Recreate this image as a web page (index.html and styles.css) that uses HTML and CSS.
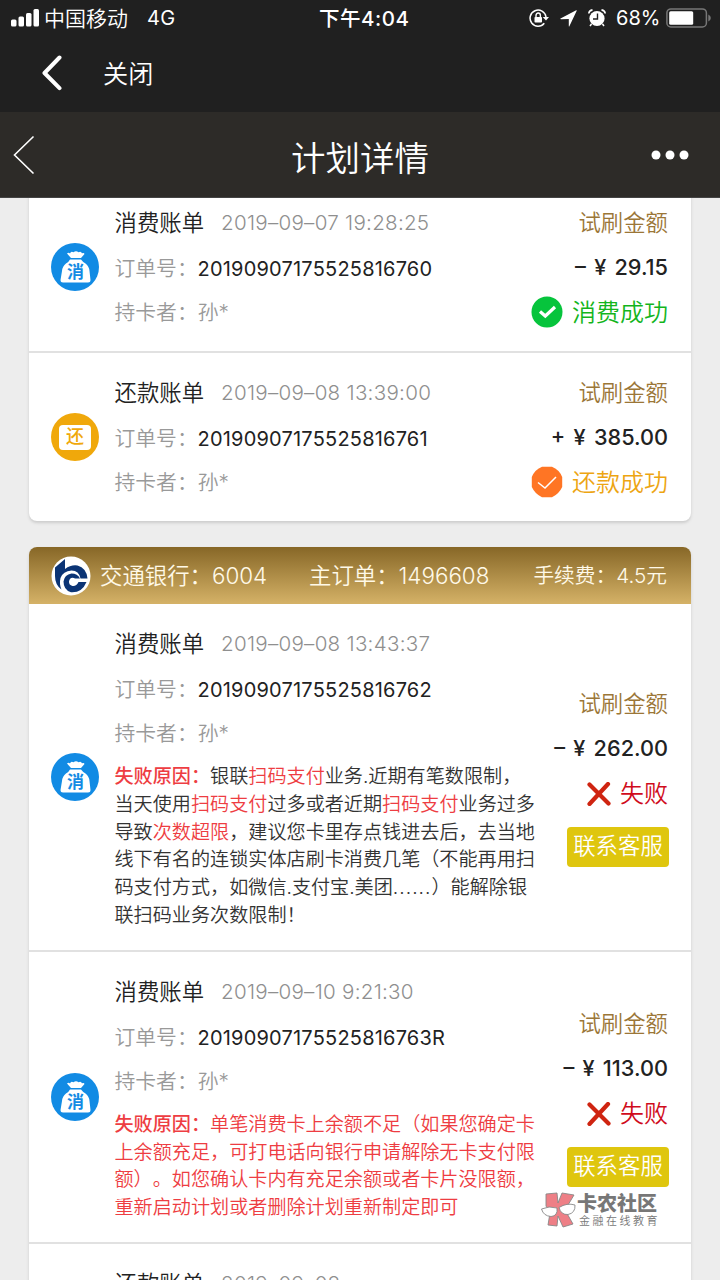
FILE: index.html
```html
<!DOCTYPE html>
<html lang="zh-CN">
<head>
<meta charset="utf-8">
<title>计划详情</title>
<link rel="stylesheet" href="styles.css">
</head>
<body>
<svg class="defs" width="0" height="0" aria-hidden="true">
  <symbol id="bag" viewBox="0 0 48 48">
    <circle cx="24" cy="24" r="24" fill="#128be4"/>
    <path d="M16 10.500q1.500-1.500 3 0q1-3 3.500-1.200q2.500-2 5 0q2.500-1.500 3.500 1q2-1 2.500.7L30 15H20z" fill="#fff"/>
    <path d="M19 16.500h11q1.500 2.200 4.500 4q3.500 2.500 4 7.500l1 9q0 2.500-2.500 2.500H12q-2.500 0-2.500-2.500l1.500-9q.5-5 4-7.500q3-1.800 4-4z" fill="#fff"/>
  </symbol>
  <symbol id="cross" viewBox="0 0 24 24"><path d="M2.500 2.500L21.500 21.500M21 2L2.500 22" fill="none" stroke="#cf2411" stroke-width="4.200" stroke-linecap="round"/></symbol>
</svg>
<div class="screen">
  <div class="status">
    <svg class="signal" width="28" height="18" viewBox="0 0 28 18" fill="#fff"><rect x="0" y="10.500" width="5.500" height="7" rx="1.500"/><rect x="7.500" y="7.500" width="5.500" height="10" rx="1.500"/><rect x="15" y="4" width="5.500" height="13.500" rx="1.500"/><rect x="22.500" y="0" width="5.500" height="17.500" rx="1.500"/></svg>
    <span class="carrier">中国移动</span><span class="net">4G</span>
    <span class="time">下午4:04</span>
    <svg class="lock" width="20" height="18" viewBox="0 0 20 18"><path d="M15.300 14.200A8 8 0 1 1 17 8" fill="none" stroke="#fff" stroke-width="1.500"/><path d="M13.700 8H20L17 11.500z" fill="#fff"/><rect x="5.500" y="8" width="7.500" height="5.500" rx=".8" fill="#fff"/><path d="M7 8V6.500a2.200 2.500 0 0 1 4.400 0V8" fill="none" stroke="#fff" stroke-width="1.400"/></svg>
    <svg class="loc" width="17" height="17" viewBox="0 0 17 17"><path d="M.5 8.500L16.200.3Q17 0 16.600.9L9.500 16Q9 17 8.800 16V8.900L1 9.200Q-.2 9 .5 8.500z" fill="#fff"/></svg>
    <svg class="alarm" width="18" height="18" viewBox="0 0 18 18"><circle cx="9" cy="9.500" r="7.600" fill="#fff"/><path d="M.8 4.500Q1 1.500 4.500.9M17.200 4.500Q17 1.500 13.500.9" fill="none" stroke="#fff" stroke-width="1.600"/><path d="M3.500 15L2 17M14.500 15l1.500 2" stroke="#fff" stroke-width="1.500"/><path d="M9.500 4.500V10H5" fill="none" stroke="#202020" stroke-width="1.400"/></svg>
    <span class="pct">68%</span>
    <svg class="batt" width="46" height="20" viewBox="0 0 46 20"><rect x=".9" y=".9" width="39.500" height="18" rx="4" fill="none" stroke="#777" stroke-width="1.500"/><rect x="3.200" y="3.200" width="24" height="13.500" rx="1.500" fill="#fff"/><path d="M42.300 6.500q2.500 1 2.500 3.500t-2.500 3.500z" fill="#777"/></svg>
  </div>
  <div class="webbar">
    <svg width="20" height="36" viewBox="0 0 20 36"><path d="M17.500 2.500L2.500 18L17.500 33.200" fill="none" stroke="#fff" stroke-width="4" stroke-linecap="round" stroke-linejoin="round"/></svg>
    <span>关闭</span>
  </div>
  <div class="titlebar">
    <svg width="22" height="40" viewBox="0 0 22 40"><path d="M20.500 1.500L1.500 20L20.500 38.500" fill="none" stroke="#fff" stroke-width="1.600"/></svg>
    <h1>计划详情</h1>
    <svg width="38" height="10" viewBox="0 0 38 10" fill="#fff"><circle cx="5" cy="5" r="4.500"/><circle cx="19" cy="5" r="4.500"/><circle cx="33" cy="5" r="4.500"/></svg>
  </div>
  <main class="content">
    <section class="card first">
      <div class="row">
        <div class="badge"><svg><use href="#bag"/></svg><b>消</b></div>
        <div class="info"><div class="head"><span class="name">消费账单</span><span class="date">2019–09–07 19:28:25</span></div><div class="order"><span class="label">订单号：</span><span class="num">20190907175525816760</span></div><div class="holder">持卡者：孙*</div></div>
        <div class="side"><div class="kind">试刷金额</div><div class="amount">– ¥ 29.15</div><div class="state ok"><svg width="32" height="32" viewBox="0 0 32 32"><circle cx="16" cy="16" r="15.500" fill="#06c43c"/><path d="M9 15.500L14.300 20L24 11" fill="none" stroke="#fff" stroke-width="3.200"/></svg>消费成功</div></div>
      </div>
      <div class="row second">
        <div class="badge pay"><b>还</b></div>
        <div class="info"><div class="head"><span class="name">还款账单</span><span class="date">2019–09–08 13:39:00</span></div><div class="order"><span class="label">订单号：</span><span class="num">20190907175525816761</span></div><div class="holder">持卡者：孙*</div></div>
        <div class="side"><div class="kind">试刷金额</div><div class="amount">+ ¥ 385.00</div><div class="state paid"><svg width="32" height="32" viewBox="0 0 32 32"><path d="M11 .8H21Q28 3.500 31.200 11V21Q28 28 21 31.200H11Q4 28 .8 21V11Q4 3.500 11 .8z" fill="#ff7524"/><path d="M7 16.500L14 22L25 11" fill="none" stroke="#fff" stroke-width="1.500"/></svg>还款成功</div></div>
      </div>
    </section>
    <section class="card">
      <div class="bank">
        <svg width="40" height="40" viewBox="0 0 40 40"><circle cx="20" cy="20" r="19.500" fill="#fff"/><path d="M4 11.500L14 3V13Q20 8.500 26.500 9.500Q35.500 12 36.500 22.500H29.500Q28 14.500 20.500 14.500Q12 15 9.500 22Q8 28 10.500 33.500Q4 29 4 20z" fill="#0b3475"/><path d="M29 22.500Q26.500 17.500 20.500 17.500Q13.500 18.500 12.500 25.500Q12.500 34 20 36.300Q31 37 35.500 26H27.500Q25.500 30.500 21.500 30Q17.800 29 18 25.500Q18.500 22 21.500 21.800Q23 21.800 24 22.500z" fill="#0b3475"/></svg>
        <span class="bank-name">交通银行：6004</span><span class="main-order">主订单：1496608</span><span class="fee">手续费：4.5元</span>
      </div>
      <div class="row">
        <div class="badge"><svg><use href="#bag"/></svg><b>消</b></div>
        <div class="info"><div class="head"><span class="name">消费账单</span><span class="date">2019–09–08 13:43:37</span></div><div class="order"><span class="label">订单号：</span><span class="num">20190907175525816762</span></div><div class="holder">持卡者：孙*</div>
          <p class="reason"><strong>失败原因：</strong>银联<em>扫码支付</em>业务.近期有笔数限制，<br>当天使用<em>扫码支付</em>过多或者近期<em>扫码支付</em>业务过多<br>导致<em>次数超限</em>，建议您卡里存点钱进去后，去当地<br>线下有名的连锁实体店刷卡消费几笔（不能再用扫<br>码支付方式，如微信.支付宝.美团<span class="dots">......</span>）能解除银<br>联扫码业务次数限制！</p></div>
        <div class="side"><div class="kind">试刷金额</div><div class="amount">– ¥ 262.00</div><div class="state fail"><svg width="24" height="24"><use href="#cross"/></svg>失败</div><div class="contact">联系客服</div></div>
      </div>
      <div class="row">
        <div class="badge"><svg><use href="#bag"/></svg><b>消</b></div>
        <div class="info"><div class="head"><span class="name">消费账单</span><span class="date">2019–09–10 9:21:30</span></div><div class="order"><span class="label">订单号：</span><span class="num">20190907175525816763R</span></div><div class="holder">持卡者：孙*</div>
          <p class="reason red"><strong>失败原因：</strong>单笔消费卡上余额不足（如果您确定卡<br>上余额充足，可打电话向银行申请解除无卡支付限<br>额）。如您确认卡内有充足余额或者卡片没限额，<br>重新启动计划或者删除计划重新制定即可</p></div>
        <div class="side"><div class="kind">试刷金额</div><div class="amount">– ¥ 113.00</div><div class="state fail"><svg width="24" height="24"><use href="#cross"/></svg>失败</div><div class="contact">联系客服</div></div>
      </div>
      <div class="row">
        <div class="badge"></div>
        <div class="info"><div class="head"><span class="name">还款账单</span><span class="date">2019–09–08</span></div></div>
      </div>
    </section>
  </main>
  <div class="watermark">
    <svg width="36" height="36" viewBox="0 0 36 36" stroke="#888" stroke-width=".9"><path d="M5 2L16 1L17 11L21 1L33 3L24 18L32 32L22 35L17 24L16 34L7 33L9 21L5 14z" fill="#ee7f86"/><path d="M.5 17Q8 13.500 16 16Q17 24 10 24.500Q2.500 24 .5 17zM18 15.500Q26 10.500 34 13Q34.500 21 27 22.500Q20 23 18 15.500z" fill="#fff"/></svg>
    <div><div class="wm-name">卡农社区</div><div class="wm-sub">金融在线教育</div></div>
  </div>
</div>
</body>
</html>
```
FILE: styles.css
```css
* { box-sizing: border-box; }
body { margin: 0; font-family: Inter, "Noto Sans CJK SC", sans-serif; font-weight: 350; text-spacing-trim: space-all; }
svg { display: block; flex: none; }
.defs { position: absolute; }
.screen { position: relative; width: 720px; height: 1280px; overflow: hidden; background: #ededed; display: flex; flex-direction: column; }
.screen span, .screen div { white-space: nowrap; }

.status { flex: none; height: 36px; background: #202020; color: #fff; display: flex; align-items: center; padding-left: 11px; font-size: 20px; }
.signal { margin-top: -1px; }
.carrier { width: 108px; padding-left: 5px; margin-top: -2px; font-size: 21px; }
.net { width: 171px; letter-spacing: .3px; font-weight: 400; }
.time { width: 211px; padding-left: 1px; margin-top: -2px; font-weight: 500; font-size: 20.500px; letter-spacing: .5px; }
.loc { margin-left: 11px; }
.alarm { margin-left: 11px; }
.pct { width: 50px; margin-left: 10px; font-weight: 400; }
.batt { margin-top: -1px; }

.webbar { flex: none; height: 76px; background: #202020; color: #fff; display: flex; align-items: center; gap: 41px; padding: 0 0 2px 42px; font-size: 25.200px; }
.webbar span { margin-top: -3px; }
.titlebar { flex: none; height: 86px; background: #2d2b28; color: #fff; display: flex; align-items: center; justify-content: space-between; padding: 0 31px 0 13px; border-bottom: 1px solid #444; }
.titlebar h1 { margin: 9px 0 0 34px; font-size: 34.500px; line-height: 50px; font-weight: 350; }

.content { flex: 1; overflow: hidden; padding: 0 29px; display: flex; flex-direction: column; gap: 26px; }
.card { flex: none; background: #fff; border-radius: 8px; box-shadow: 0 2px 3px #ccc; }
.first { margin-top: -15px; }
.row { display: flex; align-items: center; padding-left: 22px; padding-right: 23px; border-bottom: 2px solid #e1e1e1; }
.row:last-child { border-bottom: 0; }
.badge { position: relative; flex: none; width: 48px; height: 48px; display: flex; align-items: center; justify-content: center; }
.badge svg { width: 48px; height: 48px; }
.badge b { position: absolute; left: 16px; top: 18px; font-size: 17px; line-height: 22px; font-weight: 700; color: #128be4; }
.pay { border-radius: 50%; background: #f0a80b; }
.badge.pay b { position: static; width: 32px; height: 25px; border-radius: 4px; background: #fff; color: #f0a80b; line-height: 24px; text-align: center; font-size: 18px; font-weight: 500; }
.info { flex: 1; margin-left: 15.500px; padding: 17px 0 19px; }
.head, .order { display: flex; height: 46px; line-height: 46px; }
.name { width: 106.500px; font-size: 22.400px; color: #222; }
.date { font-size: 20.600px; letter-spacing: .26px; color: #8f8f8f; }
.order, .holder { font-size: 20.800px; color: #999; }
.label { width: 83px; }
.num { font-size: 20px; font-weight: 400; letter-spacing: .2px; color: #222; }
.holder { height: 40px; line-height: 41px; }
.reason { margin: 10px 0 1px; font-size: 19.120px; line-height: 27.800px; color: #333; white-space: nowrap; }
.dots { letter-spacing: 1.050px; }
.reason em { font-style: normal; color: #ee3d42; }
.reason strong { font-weight: 500; color: #ee3d42; }
.reason.red { color: #ee3d42; }
.side { position: relative; flex: none; display: flex; flex-direction: column; align-items: flex-end; width: 150px; margin-left: -150px; }
.side > div { height: 45px; line-height: 45px; }
.kind { font-size: 22.400px; color: #9b7637; }
.side > .amount { line-height: 44px; font-size: 21.700px; font-weight: 500; word-spacing: 2.500px; color: #222; }
.state { display: flex; align-items: center; gap: 9px; font-size: 24px; }
.ok { color: #13b51c; }
.paid { color: #eda512; }
.fail { color: #d00b1c; }
.side > .contact { width: 102px; height: 40px; line-height: 38px; margin: 11px -1px 5px 0; border-radius: 4px; background: #dfc60e; color: #fff; font-size: 22.400px; text-align: center; }
.bank { height: 57px; border-radius: 8px 8px 0 0; background: linear-gradient(#876727, #d5b267); color: #fff9e8; display: flex; align-items: center; padding: 0 24px 0 22px; font-size: 22.400px; }
.bank span { margin-top: -4px; }
.bank-name { width: 218px; padding-left: 9px; }
.main-order { flex: 1; }
.fee { font-size: 20.700px; }

.watermark { position: absolute; left: 541px; top: 1192px; display: flex; color: #777; }
.wm-name { font-size: 20px; line-height: 24px; font-weight: 900; }
.wm-sub { padding-left: 2px; font-size: 11px; line-height: 11px; letter-spacing: 2.500px; }
```
